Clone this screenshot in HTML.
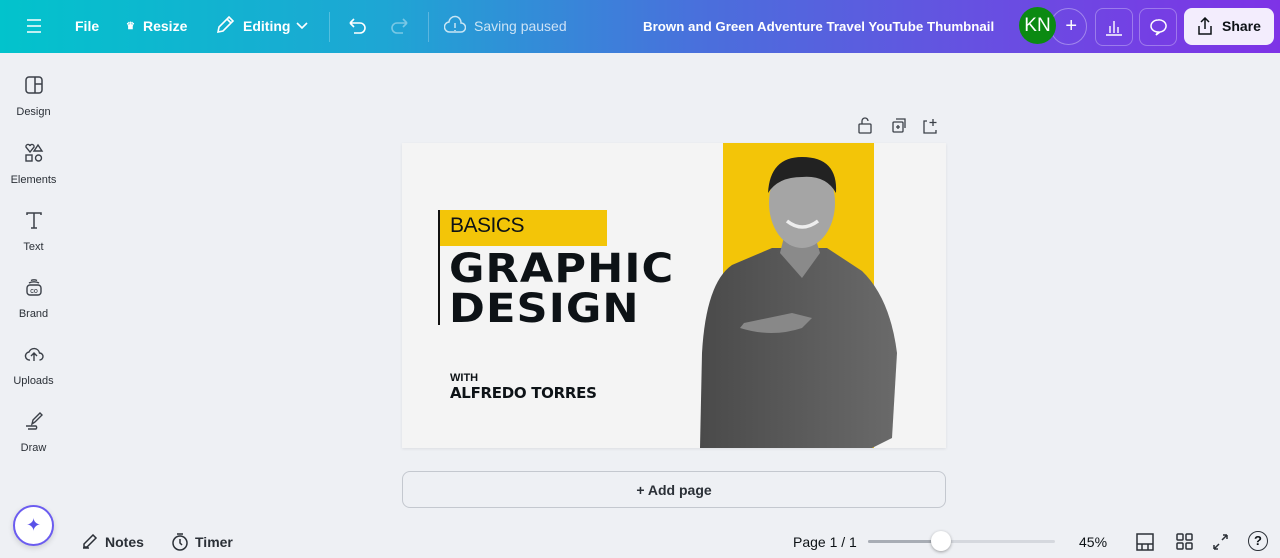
<!DOCTYPE html>
<html><head><meta charset="utf-8"><style>
*{box-sizing:border-box;margin:0;padding:0}
body{width:1280px;height:558px;overflow:hidden;background:#eef0f4;font-family:"Liberation Sans",sans-serif;position:relative;color:#0d1216}
.top{position:absolute;left:0;top:0;width:1280px;height:53px;background:linear-gradient(90deg,#02c3cc 0%,#1ea6d4 30%,#4a6fdc 55%,#6b4be2 80%,#7e33e6 100%);color:#fff}
.top .t{position:absolute;top:18px;font-size:14px;font-weight:bold}
.sep{position:absolute;top:12px;width:1px;height:30px;background:rgba(255,255,255,.25)}
.ib{position:absolute;top:8px;width:38px;height:38px;border:1px solid rgba(255,255,255,.3);border-radius:8px}
.side{position:absolute;left:0;top:53px;width:67px;height:505px}
.si{position:absolute;left:0;width:67px;text-align:center;font-size:11px;color:#2b3037}
.si svg{display:block;margin:0 auto 11px}
.bot{position:absolute;font-size:14px;font-weight:bold;color:#2b3037}
</style></head><body>
<div class="top">
 <svg style="position:absolute;left:26px;top:18px" width="16" height="16" stroke="#fff" stroke-width="1.6"><path d="M1 2h14M1 8h14M1 14h14"/></svg>
 <div class="t" style="left:75px">File</div>
 <div class="t" style="left:126px;font-size:10px;top:21px">♛</div>
 <div class="t" style="left:143px">Resize</div>
 <svg style="position:absolute;left:215px;top:15px" width="20" height="20" fill="none" stroke="#fff" stroke-width="1.6"><path d="M3 17l1-5L14 2l4 4L8 16z M12 4l4 4"/></svg>
 <div class="t" style="left:243px">Editing</div>
 <svg style="position:absolute;left:296px;top:22px" width="12" height="8" fill="none" stroke="#fff" stroke-width="1.6"><path d="M1 1l5 5 5-5"/></svg>
 <div class="sep" style="left:329px"></div>
 <svg style="position:absolute;left:347px;top:16px" width="20" height="20" fill="none" stroke="#fff" stroke-width="1.6"><path d="M3 7h10a5 5 0 010 10H7M3 7l4-4M3 7l4 4"/></svg>
 <svg style="position:absolute;left:390px;top:16px;opacity:.4" width="20" height="20" fill="none" stroke="#fff" stroke-width="1.6"><path d="M17 7H7a5 5 0 000 10h6M17 7l-4-4M17 7l-4 4"/></svg>
 <div class="sep" style="left:428px"></div>
 <svg style="position:absolute;left:444px;top:15px;opacity:.75" width="22" height="20" fill="none" stroke="#fff" stroke-width="1.5"><path d="M6 17a5 5 0 01-1-10 6 6 0 0112 1 4.5 4.5 0 010 9z M11 8v5 M11 15v1"/></svg>
 <div class="t" style="left:474px;font-weight:normal;opacity:.75">Saving paused</div>
 <div class="t" style="left:643px;font-size:13.3px;top:19px">Brown and Green Adventure Travel YouTube Thumbnail</div>
 <div style="position:absolute;left:1050px;top:8px;width:37px;height:37px;border-radius:50%;border:1px solid rgba(255,255,255,.35);text-align:right;padding-right:9px;line-height:34px;font-size:20px">+</div>
 <div style="position:absolute;left:1019px;top:7px;width:37px;height:37px;border-radius:50%;background:#0b8a12;text-align:center;line-height:37px;font-size:19px">KN</div>
 <div class="ib" style="left:1095px"><svg style="margin:9px" width="18" height="18" fill="none" stroke="#fff" stroke-width="1.4"><path d="M1 17h16M5 15V8M9 15V3M13 15V9"/></svg></div>
 <div class="ib" style="left:1139px"><svg style="margin:9px" width="18" height="18" fill="none" stroke="#fff" stroke-width="1.5"><path d="M9 2a7 6 0 100 12l-2 3 4-3a7 6 0 00-2-12z"/></svg></div>
 <div style="position:absolute;left:1184px;top:8px;width:90px;height:37px;background:#f3edfd;border-radius:8px;color:#0d1216;font-size:14px;font-weight:bold;line-height:37px;padding-left:38px">Share
  <svg style="position:absolute;left:12px;top:9px" width="18" height="18" fill="none" stroke="#0d1216" stroke-width="1.5"><path d="M9 12V1M5 5l4-4 4 4M3 9v8h12V9"/></svg></div>
</div>
<div class="side">
 <div class="si" style="top:22px"><svg width="20" height="20" fill="none" stroke="#3b4048" stroke-width="1.5"><rect x="2" y="2" width="16" height="16" rx="3"/><path d="M11 2v16M11 9h7"/></svg>Design</div>
 <div class="si" style="top:90px"><svg width="20" height="20" fill="none" stroke="#3b4048" stroke-width="1.4"><path d="M2 4a2 2 0 014-1 2 2 0 014 1l-4 5z M14 2l4 6h-8z"/><rect x="2" y="12" width="6" height="6"/><circle cx="14.5" cy="15" r="3"/></svg>Elements</div>
 <div class="si" style="top:157px"><svg width="20" height="20" fill="none" stroke="#3b4048" stroke-width="1.5"><path d="M3 5V3h14v2M10 3v15M7 18h6"/></svg>Text</div>
 <div class="si" style="top:224px"><svg width="20" height="20" fill="none" stroke="#3b4048" stroke-width="1.4"><rect x="3" y="8" width="14" height="10" rx="3"/><path d="M5 6a7 4 0 0110 0M7 3.5a5 3 0 016 0"/><text x="10" y="16" font-size="5" text-anchor="middle" fill="#3b4048" stroke="none" font-weight="bold">CO</text></svg>Brand</div>
 <div class="si" style="top:291px"><svg width="20" height="20" fill="none" stroke="#3b4048" stroke-width="1.4"><path d="M6 16a4 4 0 01-1-8 5.5 5.5 0 0110.5 1 3.5 3.5 0 010 7M10 17v-7M7 12l3-3 3 3"/></svg>Uploads</div>
 <div class="si" style="top:358px"><svg width="20" height="20" fill="none" stroke="#3b4048" stroke-width="1.4"><path d="M8 13l1-4 7-7 2 2-7 7z M2 15h10a2 2 0 010 3H4"/></svg>Draw</div>
 <div style="position:absolute;left:13px;top:452px;width:41px;height:41px;border-radius:50%;background:#fff;border:2px solid #6b5cf0;box-shadow:0 2px 6px rgba(0,0,0,.15);text-align:center;line-height:37px;color:#5a52e8;font-size:18px">✦</div>
</div>
<svg style="position:absolute;left:857px;top:117px" width="86" height="18" fill="none" stroke="#3b4048" stroke-width="1.3"><rect x="2" y="7" width="12" height="9" rx="1"/><path d="M5 7V4a3 3 0 016 0"/><rect x="36" y="5" width="10" height="10" rx="1"/><path d="M39 2h9v9M41 8v4M39 10h4"/><path d="M70 4h-3v12h12v-3M76 2v7M72.5 5.5h7"/></svg>
<div style="position:absolute;left:402px;top:143px;width:544px;height:305px;background:#f4f4f4;overflow:hidden;box-shadow:0 1px 3px rgba(0,0,0,.08)">
 <div style="position:absolute;left:321px;top:0;width:151px;height:305px;background:#f3c508"></div>
 <div style="position:absolute;left:36px;top:67px;width:2px;height:115px;background:#111"></div>
 <div style="position:absolute;left:38px;top:67px;width:167px;height:36px;background:#f3c508"></div>
 <div style="position:absolute;left:48px;top:71px;font-size:21px;letter-spacing:-0.5px">BASICS</div>
 <div style="position:absolute;left:47px;top:106px;font-size:40px;font-weight:900;line-height:40px;letter-spacing:1px;transform:scaleX(1.08);transform-origin:left;font-family:'DejaVu Sans',sans-serif">GRAPHIC<br>DESIGN</div>
 <div style="position:absolute;left:48px;top:229px;font-size:11px;font-weight:bold">WITH</div>
 <div style="position:absolute;left:48px;top:241px;font-size:15px;font-weight:900;letter-spacing:-0.3px;font-family:'DejaVu Sans',sans-serif">ALFREDO TORRES</div>
 <svg style="position:absolute;left:290px;top:10px" width="210" height="295"><defs><linearGradient id="s" x1="0" x2="1"><stop offset="0" stop-color="#4a4a4a"/><stop offset="1" stop-color="#6a6a6a"/></linearGradient></defs>
  <path d="M8 295 L10 200 Q14 130 40 112 L80 95 L135 95 L170 118 Q198 145 205 200 L200 285 L180 295Z" fill="url(#s)"/>
  <path d="M48 175 Q80 185 110 175 L120 165 L100 160 L52 170Z" fill="#888"/>
  <path d="M88 100 L93 80 L122 80 L128 100 L110 125Z" fill="#8a8a8a"/>
  <ellipse cx="110" cy="50" rx="33" ry="45" fill="#a5a5a5"/>
  <path d="M76 40 Q78 4 110 4 Q146 4 144 40 Q134 22 110 24 Q86 24 76 40Z" fill="#222"/>
  <path d="M95 68 Q110 80 126 68" stroke="#eee" stroke-width="3.5" fill="none"/>
 </svg>
</div>
<div style="position:absolute;left:402px;top:471px;width:544px;height:37px;border:1px solid #c4c8cf;border-radius:8px;text-align:center;line-height:36px;font-size:14px;font-weight:bold;color:#2b3037">+ Add page</div>
<svg style="position:absolute;left:81px;top:534px" width="20" height="16" fill="none" stroke="#2b3037" stroke-width="1.5"><path d="M2 14h6M3 10l9-9 3 3-9 9H3z"/></svg>
<div class="bot" style="left:105px;top:534px">Notes</div>
<svg style="position:absolute;left:171px;top:533px" width="18" height="18" fill="none" stroke="#2b3037" stroke-width="1.5"><circle cx="9" cy="10" r="7"/><path d="M9 6v4l2 2M6 1h6"/></svg>
<div class="bot" style="left:195px;top:534px">Timer</div>
<div class="bot" style="left:793px;top:534px;font-weight:normal;color:#0d1216">Page 1 / 1</div>
<div style="position:absolute;left:868px;top:540px;width:187px;height:3px;background:#d5d8de;border-radius:2px"></div>
<div style="position:absolute;left:868px;top:540px;width:72px;height:3px;background:#a8adb5;border-radius:2px"></div>
<div style="position:absolute;left:931px;top:531px;width:20px;height:20px;border-radius:50%;background:#fff;box-shadow:0 1px 3px rgba(0,0,0,.35)"></div>
<div class="bot" style="left:1079px;top:534px;font-weight:normal;color:#0d1216">45%</div>
<svg style="position:absolute;left:1136px;top:532px" width="122" height="20" fill="none" stroke="#2b3037" stroke-width="1.5"><rect x="1" y="2" width="16" height="16"/><path d="M1 12h16M6 12v6M12 12v6"/><rect x="41" y="2" width="6" height="6" rx="1"/><rect x="50" y="2" width="6" height="6" rx="1"/><rect x="41" y="11" width="6" height="6" rx="1"/><rect x="50" y="11" width="6" height="6" rx="1"/><path d="M78 17l5-5M78 17v-4M78 17h4M91 3l-5 5M91 3v4M91 3h-4"/></svg>
<div style="position:absolute;left:1248px;top:531px;width:20px;height:20px;border:1.5px solid #2b3037;border-radius:50%;text-align:center;line-height:17px;font-size:13px;font-weight:bold">?</div>
</body></html>
